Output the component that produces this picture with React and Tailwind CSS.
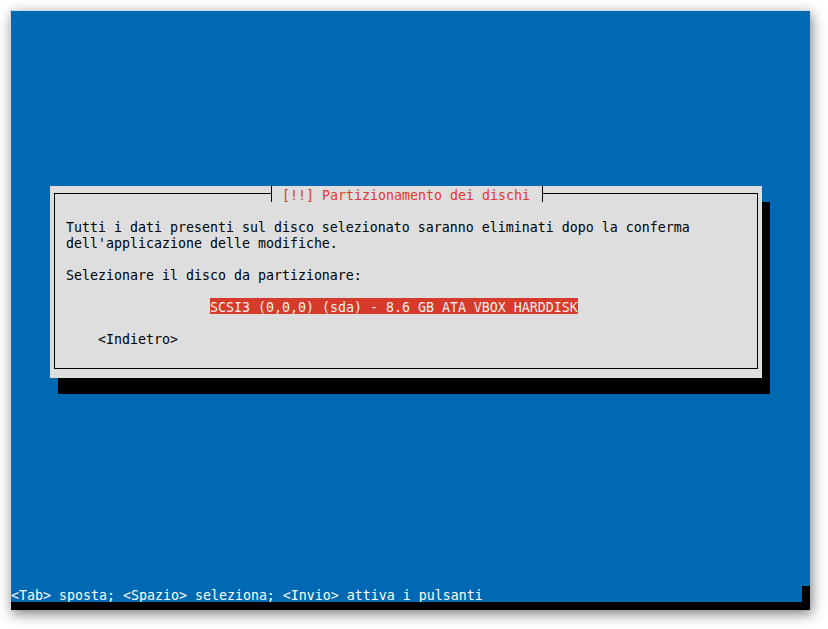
import React from 'react';

/**
 * Debian installer (newt) screen: disk partitioning dialog
 * Text grid is 8x16 px cells on an 800x600 console
 */
const Row = ({ children, className = '' }) => (
  <div className={`h-4 leading-[19px] whitespace-pre ${className}`}>{children}</div>
);

const App = () => {
  return (
    <div
      className="w-[828px] h-[629px] bg-white p-[10px] text-[13.29px]"
      style={{ fontFamily: '"DejaVu Sans Mono", "Liberation Mono", monospace' }}
    >
      <div className="w-[800px] h-[600px] bg-black flex flex-col border-l border-t border-[#d8d8d8] shadow-[2px_4px_12px_rgba(0,0,0,0.5)]">
        {/* Blue console area */}
        <div className="h-[575px] bg-[#0069b4] flex flex-col">
          <div className="mt-[175px] ml-[39px] w-[712px] h-[192px] bg-[#dedede] shadow-[8px_16px_0_0_#000] pt-[7px] pl-[4px] pr-[4px] pb-[9px]">
            <div className="relative h-full border border-black pl-[11px] pt-[24px] text-black">
              {/* Title */}
              <div className="absolute top-[-8px] left-[216px] w-[272px] h-4 bg-[#dedede] border-x border-black pl-[10px] leading-[19px] whitespace-pre text-[#e0392d]">
                [!!] Partizionamento dei dischi
              </div>

              <Row>Tutti i dati presenti sul disco selezionato saranno eliminati dopo la conferma</Row>
              <Row>dell'applicazione delle modifiche.</Row>
              <Row />
              <Row>Selezionare il disco da partizionare:</Row>
              <Row />
              <Row className="pl-[144px]">
                <span className="inline-block h-4 bg-[#d63a2a] text-[#f2f2f2]">
                  SCSI3 (0,0,0) (sda) - 8.6 GB ATA VBOX HARDDISK
                </span>
              </Row>
              <Row />
              <Row className="pl-[32px]">&lt;Indietro&gt;</Row>
            </div>
          </div>
        </div>

        {/* Status line */}
        <div className="flex h-4">
          <div className="w-[791px] bg-[#0069b4] text-white leading-[19px] whitespace-pre">
            &lt;Tab&gt; sposta; &lt;Spazio&gt; seleziona; &lt;Invio&gt; attiva i pulsanti
          </div>
          <div className="flex-1 bg-black" />
        </div>
        <div className="h-2 bg-black" />
      </div>
    </div>
  );
};

export default App;
